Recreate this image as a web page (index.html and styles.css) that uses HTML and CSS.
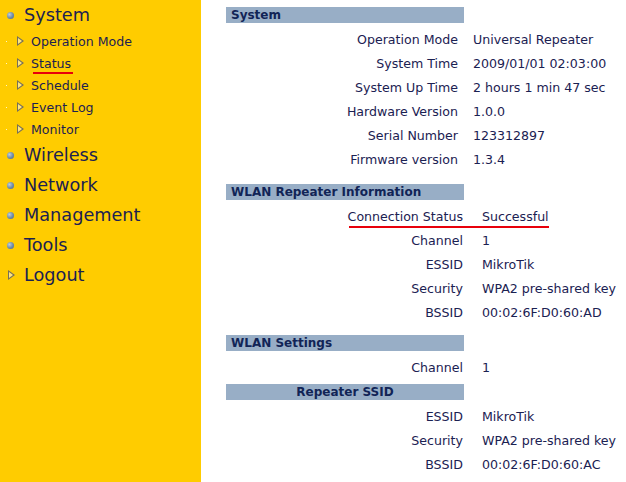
FILE: index.html
```html
<!DOCTYPE html>
<html>
<head>
	<title>Status</title>
	<meta charset="utf-8"/>
	<link rel="stylesheet" href="styles.css">
</head>
<body>
	<div class="page">
		<div class="menu">
			<div class="main"><span class="ball"></span>System</div>
			<div class="sub"><span class="dot"></span><span class="arrow"></span>Operation Mode</div>
			<div class="sub"><span class="dot"></span><span class="arrow"></span><span class="mark">Status</span></div>
			<div class="sub"><span class="dot"></span><span class="arrow"></span>Schedule</div>
			<div class="sub"><span class="dot"></span><span class="arrow"></span>Event Log</div>
			<div class="sub"><span class="dot"></span><span class="arrow"></span>Monitor</div>
			<div class="main"><span class="ball"></span>Wireless</div>
			<div class="main"><span class="ball"></span>Network</div>
			<div class="main"><span class="ball"></span>Management</div>
			<div class="main"><span class="ball"></span>Tools</div>
			<div class="main logout"><span class="arrow"></span>Logout</div>
		</div>

		<div class="content">
			<div class="section first">
				<div class="head">System</div>
				<div class="rows narrow">
					<span class="lbl">Operation Mode</span><span class="val">Universal Repeater</span>
					<span class="lbl">System Time</span><span class="val">2009/01/01 02:03:00</span>
					<span class="lbl">System Up Time</span><span class="val">2 hours 1 min 47 sec</span>
					<span class="lbl">Hardware Version</span><span class="val">1.0.0</span>
					<span class="lbl">Serial Number</span><span class="val">123312897</span>
					<span class="lbl">Firmware version</span><span class="val">1.3.4</span>
				</div>
			</div>

			<div class="section">
				<div class="head">WLAN Repeater Information</div>
				<div class="rows wide">
					<span class="lbl">Connection Status</span><span class="val mark-row">Successful</span>
					<span class="lbl">Channel</span><span class="val">1</span>
					<span class="lbl">ESSID</span><span class="val">MikroTik</span>
					<span class="lbl">Security</span><span class="val">WPA2 pre-shared key</span>
					<span class="lbl">BSSID</span><span class="val">00:02:6F:D0:60:AD</span>
				</div>
			</div>

			<div class="section last">
				<div class="head">WLAN Settings</div>
				<div class="rows wide">
					<span class="lbl">Channel</span><span class="val">1</span>
				</div>
				<div class="head center">Repeater SSID</div>
				<div class="rows wide">
					<span class="lbl">ESSID</span><span class="val">MikroTik</span>
					<span class="lbl">Security</span><span class="val">WPA2 pre-shared key</span>
					<span class="lbl">BSSID</span><span class="val">00:02:6F:D0:60:AC</span>
				</div>
			</div>
		</div>
	</div>
</body>
</html>
```

FILE: styles.css
```css
*{
	font-family: "DejaVu Sans", Verdana, sans-serif;
	color: #1b2152;
}

html,body{
	margin: 0;
	padding: 0;
	height: 100%;
	overflow: hidden;
}

.page{
	display: flex;
	height: 482px;
}

.menu{
	width: 201px;
	background: #ffcc00;
	flex-shrink: 0;
}

.main{
	display: flex;
	align-items: center;
	height: 30px;
	font-size: 17.7px;
	padding-left: 7px;
}

.ball{
	width: 7px;
	height: 7px;
	border-radius: 50%;
	background: radial-gradient(circle at 35% 35%, #b9cde0 0%, #6f8aa6 55%, #4b6482 100%);
	margin-right: 10px;
}

.sub{
	display: flex;
	align-items: center;
	height: 22px;
	font-size: 12.6px;
	padding-left: 6px;
}

.dot{
	width: 1px;
	height: 1px;
	background: #fff6c8;
	margin-right: 10px;
}

.arrow{
	width: 0;
	height: 0;
	border-top: 5px solid transparent;
	border-bottom: 5px solid transparent;
	border-left: 7px solid #77705a;
	position: relative;
	margin-right: 7px;
}

.arrow::after{
	content: "";
	position: absolute;
	left: -6px;
	top: -3px;
	border-top: 3px solid transparent;
	border-bottom: 3px solid transparent;
	border-left: 4px solid #ffe680;
}

.logout{
	padding-left: 8px;
}

.logout .arrow{
	margin-right: 9px;
}

.mark{
	position: relative;
}

.mark::after{
	content: "";
	position: absolute;
	left: 2px;
	right: -2px;
	bottom: -3px;
	height: 2px;
	background: #e8000b;
}

.content{
	flex: 1;
	background: white;
	padding-left: 25px;
}

.section{
	margin-top: 12px;
	width: 400px;
}

.section.first{
	margin-top: 7px;
}

.section.last{
	margin-top: 10px;
}

.head{
	width: 233px;
	height: 16px;
	line-height: 16px;
	background: #98aec6;
	font-size: 12px;
	font-weight: bold;
	padding-left: 5px;
	color: #112456;
}

.head.center{
	text-align: center;
	padding-left: 0;
	width: 238px;
	margin-top: 4px;
}

.rows{
	display: grid;
	padding-top: 5px;
	font-size: 12.6px;
	line-height: 24px;
	white-space: nowrap;
}

.rows.narrow{
	grid-template-columns: 232px auto;
	column-gap: 15px;
}

.rows.wide{
	grid-template-columns: 237px auto;
	column-gap: 19px;
}

.lbl{
	text-align: right;
}

.val{
	position: relative;
}

.mark-row::after{
	content: "";
	position: absolute;
	left: -133px;
	width: 200px;
	bottom: 1px;
	height: 2px;
	background: #e8000b;
}
```
